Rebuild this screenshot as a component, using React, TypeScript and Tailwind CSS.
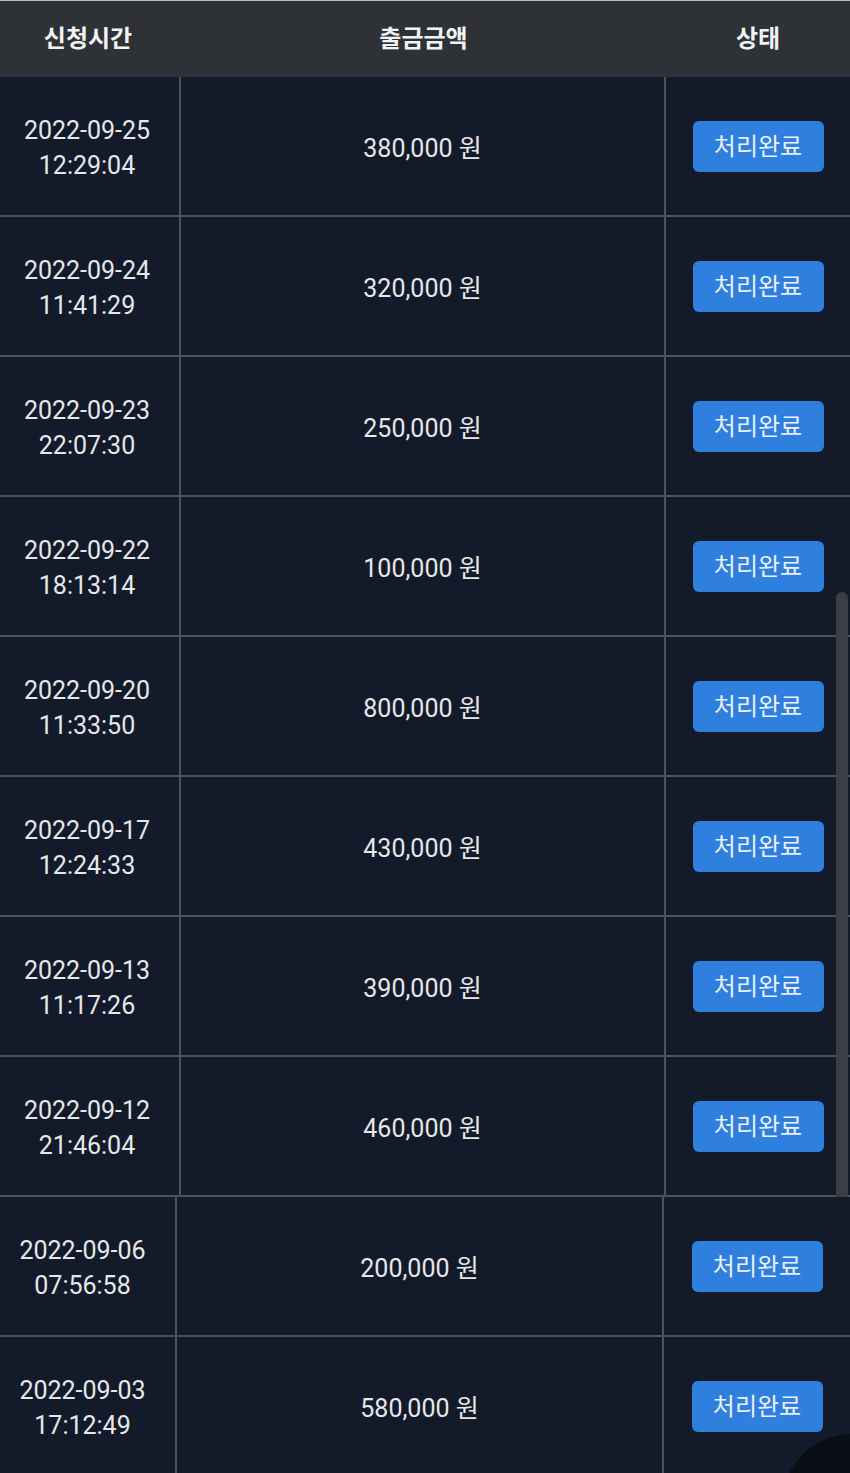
const FONT = "font-['Roboto','Noto_Sans_CJK_KR',sans-serif]";

type Row = { date: string; time: string; amount: string };

const firstRows: Row[] = [
  { date: "2022-09-25", time: "12:29:04", amount: "380,000" },
  { date: "2022-09-24", time: "11:41:29", amount: "320,000" },
  { date: "2022-09-23", time: "22:07:30", amount: "250,000" },
  { date: "2022-09-22", time: "18:13:14", amount: "100,000" },
  { date: "2022-09-20", time: "11:33:50", amount: "800,000" },
  { date: "2022-09-17", time: "12:24:33", amount: "430,000" },
  { date: "2022-09-13", time: "11:17:26", amount: "390,000" },
  { date: "2022-09-12", time: "21:46:04", amount: "460,000" },
];

const secondRows: Row[] = [
  { date: "2022-09-06", time: "07:56:58", amount: "200,000" },
  { date: "2022-09-03", time: "17:12:49", amount: "580,000" },
];

function StatusButton() {
  return (
    <span className="flex h-[51px] w-[131px] items-center justify-center rounded-[6px] bg-[#2f7fdf] text-[24px] text-[#eaf0f8]">
      처리완료
    </span>
  );
}

function HistoryRow({ row, second }: { row: Row; second?: boolean }) {
  return (
    <div
      className={`grid h-[140px] border-b-2 border-[#4d5158] ${
        second ? "grid-cols-[177px_487px_1fr]" : "grid-cols-[181px_485px_1fr]"
      }`}
    >
      {/* 신청시간 */}
      <div
        className={`flex flex-col items-center justify-center border-r-2 border-[#4d5158] pt-[3px] text-[25px] leading-[35px] text-[#e6e7e9] ${
          second ? "pr-[10px]" : "pr-[5px]"
        }`}
      >
        <span>{row.date}</span>
        <span>{row.time}</span>
      </div>

      {/* 출금금액 */}
      <div className="flex items-center justify-center border-r-2 border-[#4d5158] pt-[5px] text-[25px] text-[#e6e7e9]">
        {row.amount} 원
      </div>

      {/* 상태 */}
      <div className="flex items-center justify-center pt-[1px]">
        <StatusButton />
      </div>
    </div>
  );
}

export default function App() {
  return (
    <div className={`relative h-[1473px] w-[850px] overflow-hidden bg-[#131b2a] ${FONT}`}>
      {/* Header */}
      <div className="grid h-[77px] grid-cols-[181px_485px_1fr] border-t border-[#b9bcc1] bg-[#2e3237] text-[24px] font-bold text-[#f1f2f4]">
        <div className="flex items-center justify-center pr-[5px]">신청시간</div>
        <div className="flex items-center justify-center">출금금액</div>
        <div className="flex items-center justify-center">상태</div>
      </div>

      {/* First block */}
      <div className="relative">
        {firstRows.map((r) => (
          <HistoryRow key={r.date} row={r} />
        ))}
        <div className="absolute right-[2px] top-[515px] bottom-0 w-[12px] rounded-t-full bg-[#3a3f47]" />
      </div>

      {/* Second block */}
      <div>
        {secondRows.map((r) => (
          <HistoryRow key={r.date} row={r} second />
        ))}
      </div>

      {/* floating button edge */}
      <div className="absolute left-[782px] top-[1434px] h-[140px] w-[140px] rounded-full bg-[#0a0e15]" />
    </div>
  );
}
